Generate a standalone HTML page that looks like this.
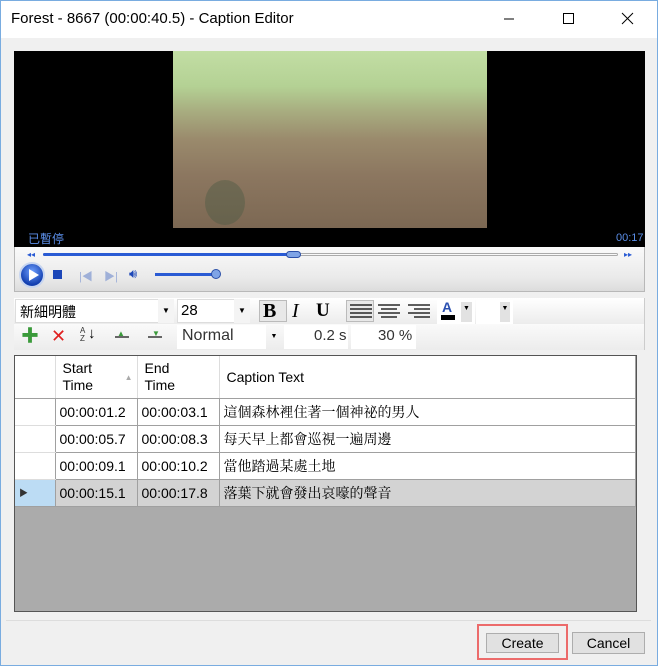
<!DOCTYPE html>
<html><head><meta charset="utf-8"><style>
*{box-sizing:border-box;margin:0;padding:0}
body{width:658px;height:666px;position:relative;overflow:hidden;background:#f0f0f0;font-family:"Liberation Sans","Noto Sans CJK TC",sans-serif;font-size:14px;color:#000}
.abs{position:absolute}
.win{left:0;top:0;width:658px;height:666px;border:1px solid #79ace0}
.title{left:1px;top:1px;width:656px;height:37px;background:#fff}
.grid td{border-right:1px solid #a0a0a0;border-bottom:1px solid #a0a0a0;padding:0 4px;font-size:14px;white-space:nowrap}
.cjk{font-family:"Noto Serif CJK SC","Noto Sans CJK TC",serif;font-size:14px}
</style></head><body>
<div class="abs win"></div>
<div class="abs title"></div>
<div class="abs" style="left:11px;top:10px;font-size:15px;color:#000">Forest - 8667 (00:00:40.5) - Caption Editor</div>
<svg class="abs" style="left:500px;top:10px" width="140" height="18"><line x1="4" y1="9" x2="14" y2="9" stroke="#000"/><rect x="63.5" y="3.5" width="10" height="10" fill="none" stroke="#000"/><path d="M122 3l11 11M133 3l-11 11" stroke="#000"/></svg>

<!-- video -->
<div class="abs" style="left:14px;top:51px;width:631px;height:196px;background:#000"></div>
<div class="abs" style="left:173px;top:51px;width:314px;height:177px;background:linear-gradient(180deg,#c2dea4 0%,#b4d194 20%,#a8ad80 34%,#9a8a6c 50%,#8c7760 70%,#7c6853 100%)"></div>
<div class="abs" style="left:205px;top:180px;width:40px;height:45px;border-radius:50%;background:#4d5a45;opacity:.45"></div>
<div class="abs" style="left:28px;top:230px;font-size:12px;color:#5b8ee8" >已暫停</div>
<div class="abs" style="left:616px;top:232px;font-size:11px;color:#5b8ee8">00:17</div>
<!-- controls -->
<div class="abs" style="left:14px;top:247px;width:631px;height:45px;background:linear-gradient(#fafafa,#eaeaea 70%,#dcdcdc);border:1px solid #b8b8b8;border-top:none"></div>
<div class="abs" style="left:43px;top:253px;width:575px;height:3px;border:1px solid #aaa;border-radius:2px;background:#f8f8f8"></div>
<div class="abs" style="left:43px;top:253px;width:248px;height:3px;background:#2a5bd4;border-radius:2px"></div>
<div class="abs" style="left:286px;top:251px;width:15px;height:7px;border-radius:4px;background:#7fa4e6;border:1px solid #2a4fa8"></div>
<div class="abs" style="left:27px;top:250px;font-size:8px;color:#2a5bd4">◂◂</div>
<div class="abs" style="left:624px;top:250px;font-size:8px;color:#2a5bd4">▸▸</div>
<div class="abs" style="left:19px;top:262px;width:26px;height:26px;border-radius:50%;background:radial-gradient(circle at 50% 35%,#6fa0ff,#1440b0 70%);border:2px solid #c8d6f0"></div>
<svg class="abs" style="left:27px;top:268px" width="14" height="14"><path d="M2 1L12 7L2 13Z" fill="#fff"/></svg>
<div class="abs" style="left:53px;top:270px;width:9px;height:9px;background:#1c47b8"></div>
<div class="abs" style="left:79px;top:268px;font-size:11px;color:#9fb0d8">|◀</div>
<div class="abs" style="left:104px;top:268px;font-size:11px;color:#9fb0d8">▶|</div>
<div class="abs" style="left:129px;top:266px;font-size:13px;color:#1c47b8">🔊︎</div>
<div class="abs" style="left:155px;top:273px;width:62px;height:3px;background:#2a5bd4"></div>
<div class="abs" style="left:211px;top:269px;width:10px;height:10px;border-radius:50%;background:#7fa4e6;border:1px solid #2a4fa8"></div>

<!-- toolbar -->
<div class="abs" style="left:14px;top:298px;width:631px;height:26px;background:linear-gradient(#fff,#ececec);border-right:1px solid #ccc"></div>
<div class="abs" style="left:15px;top:299px;width:159px;height:24px;background:#fff;border:1px solid #ddd"></div>
<div class="abs cjk" style="left:20px;top:302px;font-family:'Noto Sans CJK TC',sans-serif;font-size:14px">新細明體</div>
<div class="abs" style="left:158px;top:299px;width:16px;height:24px;background:#f4f4f4;font-size:8px;text-align:center;line-height:24px">▼</div>
<div class="abs" style="left:177px;top:299px;width:73px;height:24px;background:#fff;border:1px solid #ddd"></div>
<div class="abs" style="left:181px;top:302px;font-size:15px">28</div>
<div class="abs" style="left:234px;top:299px;width:16px;height:24px;background:#f4f4f4;font-size:8px;text-align:center;line-height:24px">▼</div>
<div class="abs" style="left:259px;top:300px;width:28px;height:22px;border:1px solid #bbb;background:#e8e8e8"></div>
<div class="abs" style="left:263px;top:300px;font-family:'Liberation Serif',serif;font-weight:bold;font-size:20px">B</div>
<div class="abs" style="left:292px;top:300px;font-family:'Liberation Serif',serif;font-style:italic;font-size:20px">I</div>
<div class="abs" style="left:316px;top:300px;font-family:'Liberation Serif',serif;font-weight:bold;font-size:19px">U</div>
<div class="abs" style="left:346px;top:300px;width:28px;height:22px;border:1px solid #bbb;background:#e8e8e8"></div>
<svg class="abs" style="left:348px;top:303px" width="90" height="18"><g stroke="#000" stroke-width="1.2"><path d="M2 2h22M2 6h22M2 10h22M2 14h22"/><path d="M30 2h22M33 6h16M30 10h22M33 14h16"/><path d="M60 2h22M66 6h16M60 10h22M66 14h16"/></g></svg>
<div class="abs" style="left:437px;top:300px;width:38px;height:24px;background:#fff"></div>
<div class="abs" style="left:442px;top:299px;font-size:14px;font-weight:bold;color:#2a4fb0">A</div>
<div class="abs" style="left:441px;top:315px;width:14px;height:5px;background:#000"></div>
<div class="abs" style="left:461px;top:302px;width:11px;height:20px;background:#e2e2e2;font-size:7px;text-align:center;line-height:14px">▼</div>
<div class="abs" style="left:476px;top:300px;width:37px;height:24px;background:#fff"></div>
<div class="abs" style="left:500px;top:302px;width:10px;height:20px;background:#e2e2e2;font-size:7px;text-align:center;line-height:14px">▼</div>

<div class="abs" style="left:14px;top:324px;width:631px;height:26px;background:linear-gradient(#fafafa,#ececec);border-right:1px solid #ccc"></div>
<div class="abs" style="left:21px;top:326px;font-size:18px;font-weight:bold;color:#3a9a3a;line-height:20px">✚</div>
<div class="abs" style="left:51px;top:325px;font-size:18px;color:#e02020;line-height:22px">✕</div>
<div class="abs" style="left:80px;top:327px;font-size:8px;color:#333;line-height:8px">A<br>Z</div>
<div class="abs" style="left:88px;top:325px;font-size:15px">↓</div>
<div class="abs" style="left:115px;top:330px;width:14px;height:8px;border-bottom:2px solid #666"></div>
<div class="abs" style="left:117px;top:329px;font-size:8px;color:#3a9a3a">▲</div>
<div class="abs" style="left:148px;top:330px;width:14px;height:8px;border-bottom:2px solid #666"></div>
<div class="abs" style="left:152px;top:329px;font-size:8px;color:#3a9a3a">▼</div>
<div class="abs" style="left:177px;top:325px;width:89px;height:24px;background:#fff"></div>
<div class="abs" style="left:182px;top:327px;font-size:16px;color:#333">Normal</div>
<div class="abs" style="left:266px;top:325px;width:16px;height:24px;font-size:7px;text-align:center;line-height:24px">▼</div>
<div class="abs" style="left:284px;top:325px;width:64px;height:24px;background:#fff"></div>
<div class="abs" style="left:314px;top:327px;font-size:15px;color:#333">0.2 s</div>
<div class="abs" style="left:351px;top:325px;width:65px;height:24px;background:#fff"></div>
<div class="abs" style="left:378px;top:327px;font-size:15px;color:#333">30 %</div>

<!-- grid -->
<div class="abs" style="left:14px;top:355px;width:623px;height:257px;background:#ababab;border:1px solid #555"></div>
<table class="abs grid" style="left:15px;top:356px;border-collapse:collapse;background:#fff">
<tr style="height:42px"><td style="width:40px;border-right:1px solid #ddd"></td><td style="width:82px;border-right:1px solid #ddd;line-height:17px;padding-left:7px;position:relative">Start<br>Time<span style="position:absolute;right:4px;top:13px;font-size:8px;color:#aaa">▲</span></td><td style="width:82px;border-right:1px solid #ddd;line-height:17px;padding-left:7px">End<br>Time</td><td style="width:416px;padding-left:7px">Caption Text</td></tr>
<tr style="height:27px"><td style="border-right-color:#a0a0a0;border-bottom-color:#ddd"></td><td>00:00:01.2</td><td>00:00:03.1</td><td class="cjk">這個森林裡住著一個神祕的男人</td></tr>
<tr style="height:27px"><td style="border-bottom-color:#ddd"></td><td>00:00:05.7</td><td>00:00:08.3</td><td class="cjk">每天早上都會巡視一遍周邊</td></tr>
<tr style="height:27px"><td style="border-bottom-color:#ddd"></td><td>00:00:09.1</td><td>00:00:10.2</td><td class="cjk">當他踏過某處土地</td></tr>
<tr style="height:27px;background:#d3d3d3"><td style="background:#bcdcf4;font-size:9px;color:#333">▶</td><td>00:00:15.1</td><td>00:00:17.8</td><td class="cjk">落葉下就會發出哀嚎的聲音</td></tr>
</table>
<div class="abs" style="left:6px;top:620px;width:645px;height:1px;background:#ddd"></div>

<!-- buttons -->
<div class="abs" style="left:477px;top:624px;width:91px;height:36px;border:2px solid #ec6b6b"></div>
<div class="abs" style="left:486px;top:633px;width:73px;height:20px;border:1px solid #adadad;background:#e1e1e1;text-align:center;line-height:18px;font-size:14px">Create</div>
<div class="abs" style="left:572px;top:632px;width:73px;height:22px;border:1px solid #adadad;background:#e1e1e1;text-align:center;line-height:20px;font-size:14px">Cancel</div>
</body></html>
